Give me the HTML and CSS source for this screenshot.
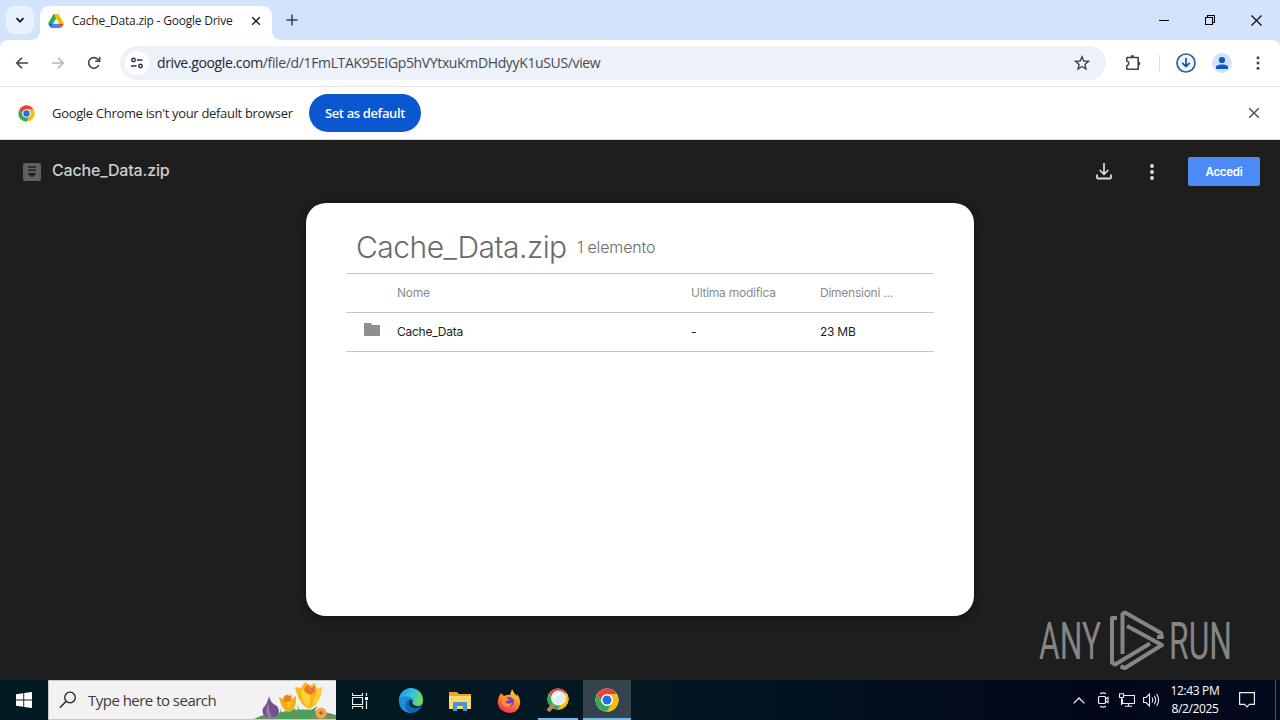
FILE: index.html
```html
<!DOCTYPE html>
<html lang="en">
<head>
<meta charset="utf-8">
<title>Cache_Data.zip - Google Drive</title>
<link rel="stylesheet" href="styles.css">
</head>
<body>
<svg width="0" height="0" class="defs">
  <symbol id="chrome" viewBox="0 0 48 48">
    <circle cx="24" cy="24" r="23" fill="#fff"/>
    <path fill="#ea4335" d="M4.1 12.5A23 23 0 0 1 43.9 12.5H24A11.5 11.5 0 0 0 14 29.8Z"/>
    <path fill="#fbbc04" d="M43.9 12.5A23 23 0 0 1 24 47L34 29.8A11.5 11.5 0 0 0 24 12.5Z"/>
    <path fill="#34a853" d="M24 47A23 23 0 0 1 4.1 12.5L14 29.8A11.5 11.5 0 0 0 34 29.8Z"/>
    <circle cx="24" cy="24" r="11.5" fill="#fff"/>
    <circle cx="24" cy="24" r="9" fill="#1a73e8"/>
  </symbol>
</svg>

<header class="tabstrip">
  <button class="tab-search"><svg width="12" height="12" viewBox="0 0 12 12"><path d="M2.5 4.2 6 7.7 9.500 4.2" fill="none" stroke="#1f1f1f" stroke-width="1.8"/></svg></button>
  <div class="tab">
    <svg class="drive" width="16" height="16" viewBox="0 0 48 44">
      <path fill="#34a853" d="M16 2Q17 1 20 1L25 14 12 35 1 30Q1 27 3 24Z"/>
      <path fill="#fbbc04" d="M20 1H29Q32 1 33 3L45 24Q47 27 47 30H33L24 14Z"/>
      <path fill="#1967d2" d="M1 30H15L11 42Q7 42 5 38L2 33Z"/>
      <path fill="#4285f4" d="M15 30H34L37 42Q35 43 33 43H14Q11 43 9 41Z"/>
      <path fill="#ea4335" d="M33 30H47Q47 32 45 35L41 40Q39 42 37 42Z"/>
    </svg>
    <span class="tab-title">Cache_Data.zip - Google Drive</span>
    <svg class="tab-close" width="10" height="10" viewBox="0 0 10 10"><path d="M1.200 1.200 8.800 8.800M8.800 1.200 1.200 8.800" stroke="#1f1f1f" stroke-width="1.500"/></svg>
  </div>
  <svg class="new-tab" width="12" height="12" viewBox="0 0 12 12"><path d="M6 .5V11.500M.5 6H11.500" stroke="#3c3f44" stroke-width="1.500"/></svg>
  <div class="window-controls">
    <svg width="10" height="10" viewBox="0 0 10 10"><path d="M0 5.500H10" stroke="#000"/></svg>
    <svg width="10" height="10" viewBox="0 0 10 10"><path d="M.5 2.500H7.500V9.500H.5ZM2.500 2.500V.5H9.500V7.500H7.500" fill="none" stroke="#000" stroke-width="1.100"/></svg>
    <svg width="11" height="11" viewBox="0 0 11 11"><path d="M.5.5 10.500 10.500M10.500.5.5 10.500" stroke="#000" stroke-width="1.100"/></svg>
  </div>
</header>

<nav class="toolbar">
  <svg class="nav-icon" width="16" height="16" viewBox="0 0 16 16"><path d="M14 8H3M8 2.800 2.800 8 8 13.200" fill="none" stroke="#42454a" stroke-width="1.600"/></svg>
  <svg class="nav-icon" width="16" height="16" viewBox="0 0 16 16"><path d="M2 8H13M8 2.800 13.200 8 8 13.200" fill="none" stroke="#b3b4b7" stroke-width="1.600"/></svg>
  <svg class="nav-icon" width="16" height="16" viewBox="0 0 16 16"><path d="M12.800 10A5.300 5.300 0 1 1 12.100 4.600L13.500 6M13.600 1.800V6.200H9.200" fill="none" stroke="#42454a" stroke-width="1.600"/></svg>
  <div class="omnibox">
    <span class="site-info"><svg width="14" height="14" viewBox="0 0 14 14"><g fill="none" stroke="#303338" stroke-width="1.500"><circle cx="3.500" cy="4" r="1.700"/><path d="M7 4H12.500M1 10H6.500"/><circle cx="10.500" cy="10" r="1.700"/></g></svg></span>
    <span class="url"><b>drive.google.com</b>/file/d/1FmLTAK95EIGp5hVYtxuKmDHdyyK1uSUS/view</span>
    <svg class="star" width="16" height="16" viewBox="0 0 16 16"><path d="M8 1.700 9.800 6 14.500 6.400 10.900 9.400 12 14 8 11.500 4 14 5.100 9.400 1.500 6.400 6.200 6Z" fill="none" stroke="#42454a" stroke-width="1.400"/></svg>
  </div>
  <svg class="ext" width="18" height="18" viewBox="0 0 18 18"><path d="M2.800 3.500H14.200V15.200H2.800V11.700Q4.800 11 4.800 9.300T2.800 7Z" fill="none" stroke="#42454a" stroke-width="1.600" stroke-linejoin="round"/><path d="M6.500 3a1.900 1.900 0 0 1 3.800 0ZM14.500 7.500a1.900 1.900 0 0 1 0 3.800Z" fill="#42454a"/></svg>
  <i class="sep"></i>
  <svg class="dl" width="20" height="20" viewBox="0 0 20 20"><circle cx="10" cy="10" r="9" fill="#eef5ff" stroke="#3559a8" stroke-width="1.700"/><path d="M10 5V13M6.200 9.800 10 13.600 13.800 9.800" fill="none" stroke="#174ea6" stroke-width="1.700"/></svg>
  <svg class="avatar" width="20" height="20" viewBox="0 0 20 20"><circle cx="10" cy="10" r="10" fill="#d3e3fd"/><circle cx="10" cy="7" r="3.100" fill="#0b57d0"/><path d="M4 16V14C4 10.500 16 10.500 16 14V16Z" fill="#0b57d0"/></svg>
  <svg class="menu" width="4" height="16" viewBox="0 0 4 16"><g fill="#42454a"><circle cx="2" cy="2.800" r="1.500"/><circle cx="2" cy="8" r="1.500"/><circle cx="2" cy="13.200" r="1.500"/></g></svg>
</nav>

<div class="infobar">
  <svg width="17" height="17"><use href="#chrome"/></svg>
  <span class="info-text">Google Chrome isn't your default browser</span>
  <button class="set-default">Set as default</button>
  <svg class="info-close" width="12" height="12" viewBox="0 0 12 12"><path d="M1.200 1.200 10.800 10.800M10.800 1.200 1.200 10.800" stroke="#4a4b4e" stroke-width="1.400"/></svg>
</div>

<main class="viewer">
  <div class="viewer-bar">
    <svg width="18" height="18" viewBox="0 0 18 18"><rect width="18" height="18" rx="2" fill="#5f6066"/><path d="M5 4H13M5 7.300H13" stroke="#202124" stroke-width="1.500"/><path d="M5 10H13V11L9.800 14H8.200L5 11Z" fill="#202124"/></svg>
    <span class="file-name">Cache_Data.zip</span>
    <svg class="download" width="16" height="17" viewBox="0 0 16 17"><path d="M8 0V11M3.700 7 8 11.300 12.300 7" fill="none" stroke="#dedede" stroke-width="1.700"/><path d="M1 11.500V14.500Q1 15.500 2 15.500H14Q15 15.500 15 14.500V11.500" fill="none" stroke="#dedede" stroke-width="1.800"/></svg>
    <svg class="more" width="4" height="16" viewBox="0 0 4 16"><g fill="#dedede"><circle cx="2" cy="2" r="1.900"/><circle cx="2" cy="8" r="1.900"/><circle cx="2" cy="14" r="1.900"/></g></svg>
    <button class="signin">Accedi</button>
  </div>
  <section class="card">
    <div class="card-head"><h1>Cache_Data.zip</h1><span>1 elemento</span></div>
    <div class="row labels"><i></i><span>Nome</span><span>Ultima modifica</span><span>Dimensioni ...</span></div>
    <div class="row"><i><svg width="16" height="13" viewBox="0 0 16 13"><path d="M0 0H6.500L8.500 2H16V13H0Z" fill="#8f8f8f"/></svg></i><span>Cache_Data</span><span>-</span><span>23 MB</span></div>
  </section>
  <svg class="watermark" width="204" height="64" viewBox="0 0 204 64">
    <g class="wm-text"><text x="1" y="50" textLength="62" lengthAdjust="spacingAndGlyphs">ANY</text><text x="131" y="50" textLength="63" lengthAdjust="spacingAndGlyphs">RUN</text></g>
    <g class="wm-mark"><path d="M79 9H74V53.500L77 55.500 112 34.500"/><path d="M84.500 45V5L87 3.500 123 24 124 28H119"/><path d="M89 17 124 36 87 59 82.500 57.500"/></g>
  </svg>
</main>

<footer class="taskbar">
  <div class="start"><svg width="16" height="16" viewBox="0 0 16 16"><path d="M0 2.200 7.300 1.200V7.600H0ZM8.200 1 16 0V7.600H8.200ZM0 8.400H7.300V14.800L0 13.800ZM8.200 8.400H16V16L8.200 15Z" fill="#fff"/></svg></div>
  <div class="search">
    <svg width="18" height="18" viewBox="0 0 18 18"><circle cx="11" cy="6.500" r="5.300" fill="none" stroke="#222" stroke-width="1.300"/><path d="M7.200 10.300.8 16.700" stroke="#222" stroke-width="1.400"/></svg>
    <span>Type here to search</span>
    <svg class="flowers" width="82" height="38" viewBox="0 0 82 38">
      <path d="M0 38Q10 32 24 32Q52 24 82 34V38Z" fill="#669264"/>
      <path d="M26 27Q29 38 35 31L42 27 36 38H27ZM43 23Q47 36 55 30L64 25 54 38H46Z" fill="#3da55a"/>
      <path d="M15 15Q13 24 9 27Q7 34 13 36H21Q28 32 23 25Q16 22 15 15Z" fill="#745090"/><path d="M15 22Q10 29 14 36H18Q14 28 15 22" fill="#9679af"/>
      <path d="M25 16 30 19 34 13 37 18 42 15Q43 27 36 31Q28 31 25 16" fill="#f7ad16"/><path d="M31 17 34 13 37 18 35 28Z" fill="#ffcf38"/><path d="M29 18Q31 12 35 15L38 14 36 21H30Z" fill="#ec8120"/>
      <path d="M41 6 47 7 51 1 56 5 61 2 63 8 68 6Q67 23 55 28Q45 24 41 6" fill="#f9b51a"/><path d="M47 9 53 7 57 12 55 27Q48 21 47 9" fill="#ffd23c"/><path d="M63 9 68 6Q66 21 58 26Z" fill="#ffcf35"/><path d="M50 8 54 3 57 7 61 5 61 11 56 14 51 11Z" fill="#ed7726"/>
      <circle cx="67" cy="32" r="5.500" fill="#f4a74a"/><circle cx="67" cy="32" r="1.800" fill="#b85b25"/>
    </svg>
  </div>
  <div class="app"><svg width="16" height="16" viewBox="0 0 16 16"><path d="M.5 0V2.500H10.500V0M.5 16V13.500H10.500V16M.5 4.500H10.500V11.500H.5ZM14.500 0V3M14.500 8V16" fill="none" stroke="#eee" stroke-width="1.200"/><path d="M13 4H16V7H13Z" fill="#fff"/></svg></div>
  <div class="app edge"><svg width="26" height="26" viewBox="0 0 26 26">
    <defs><linearGradient id="eg" x1="0" y1="0" x2="1" y2=".4"><stop offset="0" stop-color="#2091df"/><stop offset=".55" stop-color="#36bee4"/><stop offset="1" stop-color="#68dc60"/></linearGradient></defs>
    <circle cx="13" cy="13" r="12" fill="#1466b8"/><path d="M1 12A12 12 0 0 1 25 12Q25 18 18.500 18Q14 18 15 15Q17 10 10 9Q4 8 1 12" fill="url(#eg)"/><path d="M1 12Q5 7 11 9Q17 12 15 14Q11 9 8 14Q5 22 13 25Q1 24 1 12" fill="#1b91da"/><path d="M12 12Q9 18 15 20Q19 21 24 18Q20 19 16 17Q13 16 14 12Z" fill="#062e4b"/></svg></div>
  <div class="app explorer"><svg width="22" height="20" viewBox="0 0 22 20"><path d="M0 1H8L10 3H22V18H0Z" fill="#e5a72e"/><path d="M0 5H22V18H0Z" fill="#ffd76c"/><path d="M4 11H18V20H14V15H8V20H4Z" fill="#4397d1"/></svg></div>
  <div class="app firefox"><svg width="24" height="24" viewBox="0 0 24 24"><defs><linearGradient id="ff" x1=".8" y1="0" x2=".3" y2="1"><stop offset="0" stop-color="#ffe13b"/><stop offset=".5" stop-color="#ff8428"/><stop offset="1" stop-color="#f52b68"/></linearGradient></defs><path d="M4 4 7 7Q11 5 13 6L15 0Q17 5 20 7V5Q24 10 23 15Q21 24 12 24Q3 23 1 15Q0 9 4 4" fill="url(#ff)"/><path d="M7 10Q12 5 17 11Q17 19 10 18Q4 14 7 10" fill="#7142c1"/><path d="M5 7Q8 6 12 11L8 13Q10 16 15 14Q13 20 7 17Q3 13 5 7" fill="#ff9527"/></svg></div>
  <div class="app running"><svg width="24" height="26" viewBox="0 0 24 26"><use href="#chrome" x="1" y="1" width="22" height="22"/><path d="M8 17 2 24" stroke="#b9865c" stroke-width="4"/><circle cx="12.500" cy="11" r="6.700" fill="#d7eff6" stroke="#eef3f3" stroke-width="1.600"/><path d="M8.500 11Q9 7 14 7" stroke="#fff" fill="none" stroke-width="2"/></svg></div>
  <div class="app running active"><svg width="24" height="24"><use href="#chrome"/></svg></div>
  <div class="tray">
    <svg class="caret" width="12" height="7" viewBox="0 0 12 7"><path d="M.6 6.400 6 1 11.400 6.400" fill="none" stroke="#eee" stroke-width="1.300"/></svg>
    <svg class="cam" width="12" height="16" viewBox="0 0 12 16"><path d="M3 1.700Q6 0 9 1.700M3 14.300Q6 16 9 14.300" fill="none" stroke="#eee" stroke-width="1.100"/><rect x="1.500" y="4.500" width="7" height="7" rx="1" fill="none" stroke="#eee" stroke-width="1.200"/><path d="M8.500 7 11 5.200V10.800L8.500 9" fill="none" stroke="#eee" stroke-width="1.100"/></svg>
    <svg class="net" width="16" height="14" viewBox="0 0 16 14"><path d="M5 2.500H15.500V10.500H3.500V6M9.500 10.500V13M6 13.300H13M.5.700H4.500V4.500H.5ZM2.500 4.500V12" fill="none" stroke="#eee" stroke-width="1.100"/></svg>
    <svg class="vol" width="17" height="14" viewBox="0 0 17 14"><path d="M.6 4.500H3L6.500 1V13L3 9.500H.6ZM9 4.500Q10.500 7 9 9.500M11.300 2.800Q14 7 11.300 11.200M13.600 1Q17.700 7 13.600 13" fill="none" stroke="#eee" stroke-width="1.100"/></svg>
    <div class="clock"><div>12:43 PM</div><div>8/2/2025</div></div>
    <svg class="note" width="16" height="16" viewBox="0 0 16 16"><path d="M.6.600H15.400V12.400H10.500L8 14.900 5.500 12.400H.6Z" fill="none" stroke="#eee" stroke-width="1.200"/></svg>
    <i class="show-desktop"></i>
  </div>
</footer>
</body>
</html>
```
FILE: styles.css
```css
* { box-sizing: border-box; }
body { margin: 0; width: 1280px; height: 720px; overflow: hidden; display: flex; flex-direction: column; background: #fff; font-family: "Open Sans", "Noto Sans", sans-serif; color: #1f1f1f; }
svg { display: block; flex: none; }
.defs { position: absolute; }
button { border: 0; padding: 0; font: inherit; }
span { white-space: nowrap; }

.tabstrip { height: 46px; margin-bottom: -6px; flex: none; display: flex; align-items: flex-start; background: #d3e3fd; }
.tab-search { width: 28px; height: 28px; margin: 6px 0 0 6px; border-radius: 9px; background: #e9f0fe; display: grid; place-items: center; }
.tab { width: 232px; height: 35px; margin: 6px 0 0 6px; padding: 0 10px 6px 8px; border-radius: 9px 9px 0 0; background: #fff; display: flex; align-items: center; position: relative; }
.tab::before, .tab::after { content: ""; position: absolute; bottom: 1px; width: 8px; height: 8px; }
.tab::before { left: -8px; background: radial-gradient(circle at 0 0, transparent 7.500px, #fff 8px); }
.tab::after { right: -8px; background: radial-gradient(circle at 100% 0, transparent 7.500px, #fff 8px); }
.tab-title { margin-left: 8px; font-size: 12px; letter-spacing: -.22px; }
.tab-close { margin-left: auto; margin-right: 1px; }
.new-tab { margin: 14px 0 0 14px; }
.window-controls { margin: 15px 18px 0 auto; display: flex; gap: 36px; }

.toolbar { height: 47px; flex: none; display: flex; align-items: center; padding: 0 20px 0 14px; background: #fff; border-bottom: 1px solid #e1e3e6; border-radius: 8px 8px 0 0; position: relative; }
.nav-icon { margin-right: 20px; }
.omnibox { width: 986px; height: 34px; margin-left: -2px; border-radius: 17px; background: #edf1fa; display: flex; align-items: center; padding: 0 16px 0 5px; }
.site-info { width: 24px; height: 24px; border-radius: 50%; background: #fff; display: grid; place-items: center; }
.url { margin-left: 8px; padding-bottom: 1px; font-size: 14px; letter-spacing: -.36px; color: #474a50; }
.url b { font-weight: 400; color: #24272b; }
.star { margin-left: auto; }
.ext { margin-left: 18px; }
.sep { width: 1px; height: 16px; margin-left: 17px; background: #d3def2; }
.dl { margin-left: 16px; }
.avatar { margin-left: 16px; }
.menu { margin-left: 24px; }

.infobar { height: 53px; flex: none; display: flex; align-items: center; padding: 0 20px 0 18px; border-bottom: 1px solid #dadce0; }
.info-text { width: 241px; margin-left: 17px; font-size: 13px; letter-spacing: -.32px; }
.set-default { width: 112px; height: 38px; margin-left: 16px; border-radius: 19px; background: #0b57d0; color: #fff; font-size: 13px; font-weight: 600; letter-spacing: -.37px; }
.info-close { margin-left: auto; }

.viewer { height: 540px; flex: none; background: #1e1e1e; display: flex; flex-direction: column; position: relative; }
.viewer-bar { height: 63px; flex: none; display: flex; align-items: center; padding: 0 20px 0 23px; }
.file-name { margin-left: 11px; padding-bottom: 3px; font: 500 16px Inter, sans-serif; letter-spacing: -.18px; color: #cfcfcf; }
.download { margin-left: auto; }
.more { margin-left: 38px; }
.signin { width: 72px; height: 29px; margin-left: 34px; border-radius: 2px; background: #4c8bf5; color: #fff; font: 600 11.500px Inter, sans-serif; letter-spacing: -.25px; }
.card { width: 668px; height: 413px; margin: 0 auto; padding: 18px 40px 0; border-radius: 20px; background: #fff; box-shadow: 0 2px 10px rgba(0,0,0,.45); font-family: Inter, sans-serif; }
.card-head { height: 53px; padding-left: 10px; display: flex; align-items: center; border-bottom: 1px solid #c6c6c6; color: #6b6b6b; }
.card h1 { width: 211px; margin: 0; font-size: 30px; font-weight: 300; letter-spacing: -.53px; white-space: nowrap; }
.card-head span { margin-left: 10px; font-size: 16px; font-weight: 300; letter-spacing: -.15px; }
.row { height: 39px; display: grid; grid-template-columns: 51px 294px 129px 114px; align-items: center; border-bottom: 1px solid #c6c6c6; font-size: 12px; letter-spacing: -.25px; color: #222; }
.row span { padding-bottom: 2px; }
.row i { padding: 0 0 5px 18px; }
.labels { color: #8b8b8b; }
.watermark { position: absolute; left: 1038px; top: 609px; margin-top: -140px; }
.wm-text { font: 52px Roboto, sans-serif; fill: #858585; }
.wm-mark { fill: none; stroke: #858585; stroke-width: 4; stroke-linejoin: round; }

.taskbar { height: 40px; flex: none; display: flex; background: linear-gradient(90deg, #021a22, #031721 50%, #02081a 85%, #030a1a); color: #fff; }
.start { width: 48px; display: grid; place-items: center; }
.search { width: 288px; display: flex; align-items: center; padding-left: 10px; background: #f2f2f2; border: 1px solid #c5c8ca; border-width: 1px 0 1px 1px; color: #3b3b3b; }
.search span { margin-left: 11px; font-size: 15px; letter-spacing: -.52px; }
.flowers { margin-left: auto; }
.app { width: 48px; padding-top: 1px; display: grid; place-items: center; }
.edge, .firefox { width: 54px; }
.explorer { width: 44px; }
.running { width: 40px; margin-left: 2px; border-bottom: 2px solid #76b9ed; }
.active { width: 48px; margin-left: 5px; background: #35434c; }
.tray { display: flex; align-items: center; margin-left: auto; padding-right: 4px; }
.cam { margin-left: 12px; }
.net { margin-left: 10px; }
.vol { margin-left: 8px; }
.clock { width: 60px; margin-left: 5px; font-size: 12px; line-height: 18px; letter-spacing: -.36px; text-align: center; }
.note { margin-left: 14px; }
.show-desktop { width: 1px; height: 40px; margin-left: 20px; background: #4b5463; }
```
